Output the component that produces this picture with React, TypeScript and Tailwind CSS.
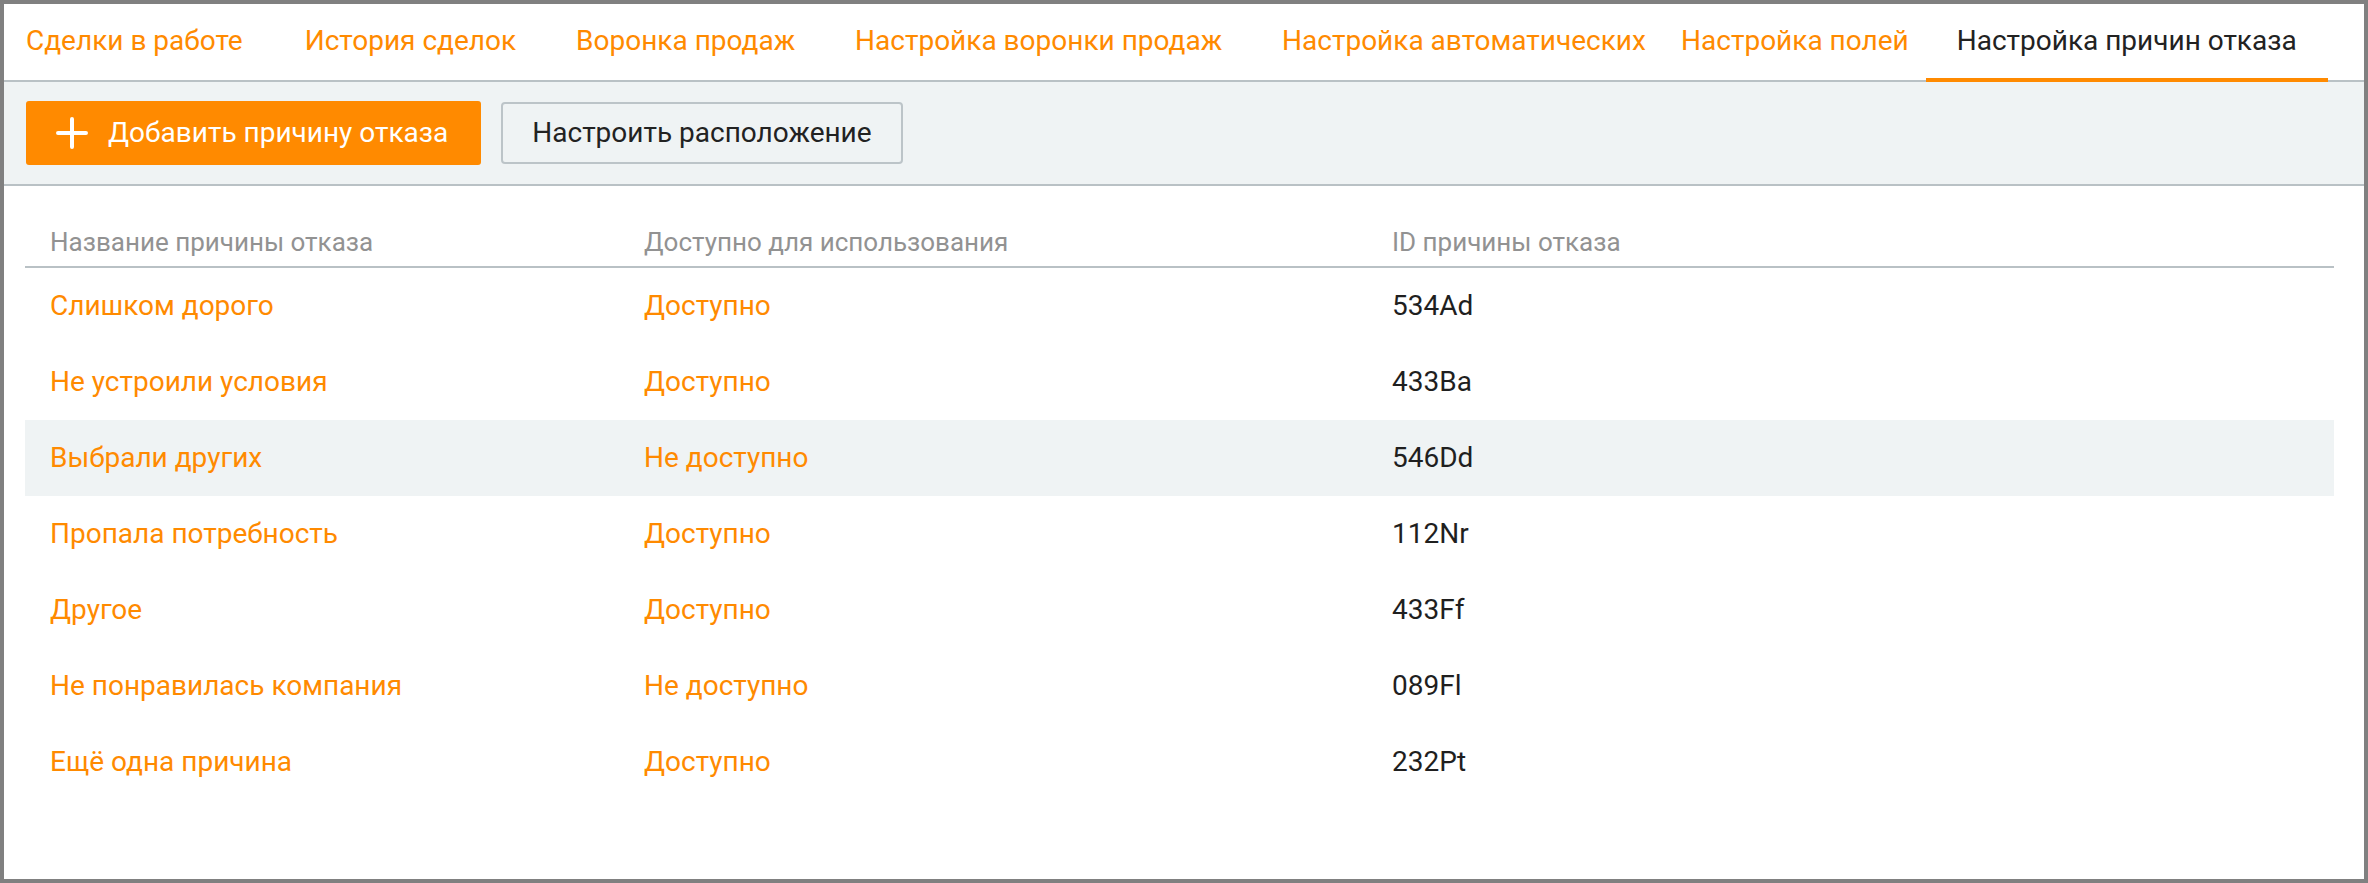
import React from 'react';

const tabs = [
  { label: 'Сделки в работе', pad: 'pr-[31px] ' },
  { label: 'История сделок', pad: 'pl-[31px] pr-[30px] ' },
  { label: 'Воронка продаж', pad: 'px-[30px] ' },
  { label: 'Настройка воронки продаж', pad: 'px-[30px] ' },
  { label: 'Настройка автоматических', pad: 'pl-[30px] w-[399px] overflow-hidden ' },
  { label: 'Настройка полей', pad: 'pl-[30px] pr-[17px] ' },
  { label: 'Настройка причин отказа', pad: 'px-[31px] ', active: true },
];

const rows = [
  { name: 'Слишком дорого', status: 'Доступно', id: '534Ad' },
  { name: 'Не устроили условия', status: 'Доступно', id: '433Ba' },
  { name: 'Выбрали других', status: 'Не доступно', id: '546Dd', hover: true },
  { name: 'Пропала потребность', status: 'Доступно', id: '112Nr' },
  { name: 'Другое', status: 'Доступно', id: '433Ff' },
  { name: 'Не понравилась компания', status: 'Не доступно', id: '089Fl' },
  { name: 'Ещё одна причина', status: 'Доступно', id: '232Pt' },
];

const PlusIcon = () => (
  <svg width="32" height="32" viewBox="0 0 32 32" fill="none">
    <path d="M16 2v28M2 16h28" stroke="white" strokeWidth="4" strokeLinecap="round" />
  </svg>
);

export default function App() {
  return (
    <div className="w-[2368px] h-[883px] border-4 border-[#808080] bg-white flex flex-col font-['Roboto',sans-serif] overflow-hidden">
      {/* tabs */}
      <div className="h-[78px] border-b-2 border-[#b9c1c5] flex items-stretch pl-[22px] shrink-0">
        {tabs.map((t, i) => (
          <div
            key={i}
            className={
              'relative flex items-center text-[28px] whitespace-nowrap ' +
              t.pad +
              (t.active ? 'text-[#222222]' : 'text-[#ff8a00]')
            }
          >
            <span className="-mt-[2px]">{t.label}</span>
            {t.active && <div className="absolute left-0 right-0 bottom-[-2px] h-[4px] bg-[#ff8a00]" />}
          </div>
        ))}
      </div>

      {/* toolbar */}
      <div className="h-[104px] bg-[#eff3f4] border-b-2 border-[#b9c1c5] flex items-center pl-[22px] gap-[20px] shrink-0">
        <button className="h-[64px] bg-[#ff8a00] rounded-[3px] flex items-center pl-[30px] pr-[33px] gap-[20px] text-white text-[28px]">
          <PlusIcon />
          <span>Добавить причину отказа</span>
        </button>
        <button className="h-[62px] border-2 border-[#bcc4c8] rounded-[4px] flex items-center px-[29px] text-[#222222] text-[28px]">
          Настроить расположение
        </button>
      </div>

      {/* table */}
      <div className="pl-[21px] pr-[30px]">
        <div className="grid grid-cols-[594px_748px_1fr] h-[82px] border-b-2 border-[#b9c1c5] items-end pb-[7px] text-[26px] text-[#929292] leading-[34px]">
          <div className="pl-[25px]">Название причины отказа</div>
          <div className="pl-[25px]">Доступно для использования</div>
          <div className="pl-[25px]">ID причины отказа</div>
        </div>
        {rows.map((r, i) => (
          <div
            key={i}
            className={
              'grid grid-cols-[594px_748px_1fr] h-[76px] items-center text-[28px] ' +
              (r.hover ? 'bg-[#eff3f4]' : '')
            }
          >
            <div className="pl-[25px] text-[#ff8a00]">{r.name}</div>
            <div className="pl-[25px] text-[#ff8a00]">{r.status}</div>
            <div className="pl-[25px] text-[#1f1f1f]">{r.id}</div>
          </div>
        ))}
      </div>
    </div>
  );
}
